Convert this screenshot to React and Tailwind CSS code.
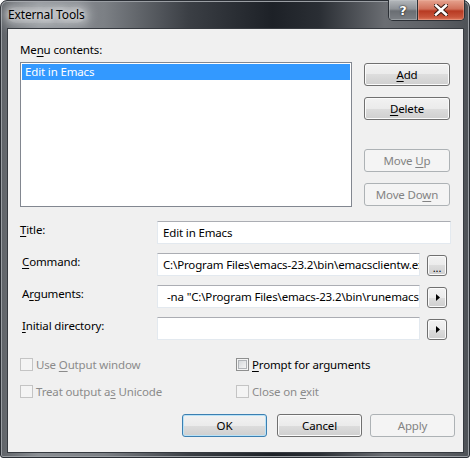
import React from "react";

function U({ children }) {
  return <span className="underline underline-offset-[2px] decoration-[1px]">{children}</span>;
}

function Btn({ children, className = "", disabled = false, isDefault = false }) {
  if (disabled) {
    return (
      <div className={"flex items-center justify-center h-[23px] rounded-[3px] border border-[#adb2b5] bg-[#f4f4f4] text-[#838383] " + className}>
        <span>{children}</span>
      </div>
    );
  }
  if (isDefault) {
    return (
      <div className={"flex items-center justify-center h-[23px] rounded-[3px] border border-[#3c7fb1] shadow-[inset_0_0_0_1px_#b9e2f7] bg-[linear-gradient(#f2f2f2_0%,#ebebeb_50%,#dddddd_50%,#cfcfcf_100%)] text-black " + className}>
        <span>{children}</span>
      </div>
    );
  }
  return (
    <div className={"flex items-center justify-center h-[23px] rounded-[3px] border border-[#707070] shadow-[inset_0_0_0_1px_#fbfbfb] bg-[linear-gradient(#f2f2f2_0%,#ebebeb_50%,#dddddd_50%,#cfcfcf_100%)] text-black " + className}>
      <span>{children}</span>
    </div>
  );
}

function SmallBtn({ children }) {
  return (
    <div className="mt-[2px] ml-[7px] w-[20px] h-[21px] flex items-center justify-center rounded-[3px] border border-[#707070] shadow-[inset_0_0_0_1px_#fbfbfb] bg-[linear-gradient(#f2f2f2_0%,#ebebeb_50%,#dddddd_50%,#cfcfcf_100%)]">
      {children}
    </div>
  );
}

function Arrow() {
  return (
    <svg width="4" height="7" viewBox="0 0 4 7" className="ml-[1px]">
      <path d="M0 0 L4 3.5 L0 7 Z" fill="#000" />
    </svg>
  );
}

function Check({ disabled = false }) {
  if (disabled) {
    return <div className="w-[13px] h-[13px] shrink-0 border border-[#c4c4c4] bg-[#f4f4f4]" />;
  }
  return (
    <div className="w-[13px] h-[13px] shrink-0 border border-[#8e8f8f] bg-[#f4f4f4] p-[1px]">
      <div className="w-full h-full border border-[#b1b4b8] bg-[linear-gradient(135deg,#d6d9dc,#f4f4f4)]" />
    </div>
  );
}

function Field({ children, className = "" }) {
  return (
    <div className={"h-[23px] bg-white border border-[#e3e9ef] border-t-[#abadb3] flex items-center pl-[5px] whitespace-nowrap overflow-hidden " + className}>
      {children}
    </div>
  );
}

export default function App() {
  return (
    <div className="w-[475px] h-[464px] bg-white font-['Noto_Sans',sans-serif] text-[11.5px] tracking-[-0.15px] leading-[16px] text-black">
      <div className="w-[470px] h-[458px] rounded-t-[7px] rounded-b-[3px] border border-[#2a2e34] bg-[linear-gradient(90deg,#5f6368_0%,#8b8f94_8%,#7c8085_22%,#3b3f45_40%,#1d2127_58%,#2a2e34_68%,#6a6d72_82%,#5e6166_92%,#4e5257_100%)] flex flex-col shadow-[inset_0_0_0_1px_#9a9ea3]">
        {/* title bar */}
        <div className="h-[27px] flex items-start pl-[7px] pr-[4px]">
          <div className="mt-[6px] text-[12px] leading-[16px] text-black rounded-[8px] bg-[#d9dbde66] shadow-[0_0_10px_6px_#d9dbde55] [text-shadow:0_0_6px_#fff,0_0_10px_#fff]">External Tools</div>
          <div className="ml-auto -mt-[1px] flex h-[21px] rounded-b-[5px] border border-t-0 border-[#2c3036] overflow-hidden">
            <div className="w-[29px] h-full flex items-center justify-center border-r border-[#2c3036] bg-[linear-gradient(#b4b8bc_0%,#8d9196_45%,#6a6e73_55%,#7c8085_100%)] shadow-[inset_0_0_0_1px_#c9cccf66]">
              <span className="font-['DejaVu_Sans',sans-serif] font-bold text-[13px] leading-none text-white [text-shadow:0_0_2px_#222,0_0_1px_#000]">?</span>
            </div>
            <div className="w-[46px] h-full flex items-center justify-center bg-[linear-gradient(#e6a38f_0%,#d0705a_45%,#b83a22_55%,#c8553b_85%,#e07a5e_100%)] shadow-[inset_0_0_0_1px_#f0b8a866]">
              <svg width="14" height="12" viewBox="0 0 14 12">
                <path d="M2 1.5 L12 10.5 M12 1.5 L2 10.5" stroke="#3a1a12" strokeWidth="4.6" strokeLinecap="square" />
                <path d="M2 1.5 L12 10.5 M12 1.5 L2 10.5" stroke="#fff" strokeWidth="2.6" strokeLinecap="square" />
              </svg>
            </div>
          </div>
        </div>
        {/* client */}
        <div className="ml-[6px] w-[457px] h-[425px] bg-[#f0f0f0] border border-[#363a40] pl-[12px]">
          <div className="mt-[13px] h-[16px]">
            Me<U>n</U>u contents:
          </div>
          <div className="mt-[4px] flex items-start">
            <div className="w-[332px] h-[145px] border border-[#828790] bg-white p-[1px]">
              <div className="h-[16px] bg-[#3399ff] text-white pl-[3px] leading-[16px]">Edit in Emacs</div>
            </div>
            <div className="ml-[12px] w-[86px] flex flex-col pt-[1px]">
              <Btn><U>A</U>dd</Btn>
              <Btn className="mt-[11px]"><U>D</U>elete</Btn>
              <Btn className="mt-[29px]" disabled>Move <U>U</U>p</Btn>
              <Btn className="mt-[11px]" disabled>Move Do<U>w</U>n</Btn>
            </div>
          </div>

          <div className="mt-[14px] flex flex-col gap-[9px]">
            <div className="flex items-start">
              <div className="w-[137px] pt-[1px]"><U>T</U>itle:</div>
              <Field className="w-[294px]">Edit in Emacs</Field>
            </div>
            <div className="flex items-start">
              <div className="w-[137px] pt-[1px] pl-[2px]"><U>C</U>ommand:</div>
              <Field className="w-[263px]">C:\Program Files\emacs-23.2\bin\emacsclientw.exe</Field>
              <SmallBtn><span className="text-[11px] leading-none mt-[3px]">...</span></SmallBtn>
            </div>
            <div className="flex items-start">
              <div className="w-[137px] pt-[1px] pl-[2px]">A<U>r</U>guments:</div>
              <Field className="w-[263px] border-[#a4c9e8] border-t-[#3d7bad] pl-[9px]">-na "C:\Program Files\emacs-23.2\bin\runemacs.exe"</Field>
              <SmallBtn><Arrow /></SmallBtn>
            </div>
            <div className="flex items-start">
              <div className="w-[137px] pt-[1px] pl-[2px]"><U>I</U>nitial directory:</div>
              <Field className="w-[263px]"></Field>
              <SmallBtn><Arrow /></SmallBtn>
            </div>
          </div>

          <div className="mt-[18px] flex flex-col gap-[14px]">
            <div className="flex h-[13px] items-center">
              <div className="w-[216px] flex items-center text-[#8b8b8b]">
                <Check disabled />
                <span className="ml-[3px]">Use <U>O</U>utput window</span>
              </div>
              <div className="flex items-center">
                <Check />
                <span className="ml-[3px]"><U>P</U>rompt for arguments</span>
              </div>
            </div>
            <div className="flex h-[13px] items-center">
              <div className="w-[216px] flex items-center text-[#8b8b8b]">
                <Check disabled />
                <span className="ml-[3px]">Treat output a<U>s</U> Unicode</span>
              </div>
              <div className="flex items-center text-[#8b8b8b]">
                <Check disabled />
                <span className="ml-[3px]">Close on <U>e</U>xit</span>
              </div>
            </div>
          </div>

          <div className="mt-[16px] flex">
            <Btn isDefault className="ml-[162px] w-[85px]">OK</Btn>
            <Btn className="ml-[10px] w-[85px]">Cancel</Btn>
            <Btn disabled className="ml-[8px] w-[85px]">Apply</Btn>
          </div>
        </div>
      </div>
    </div>
  );
}
